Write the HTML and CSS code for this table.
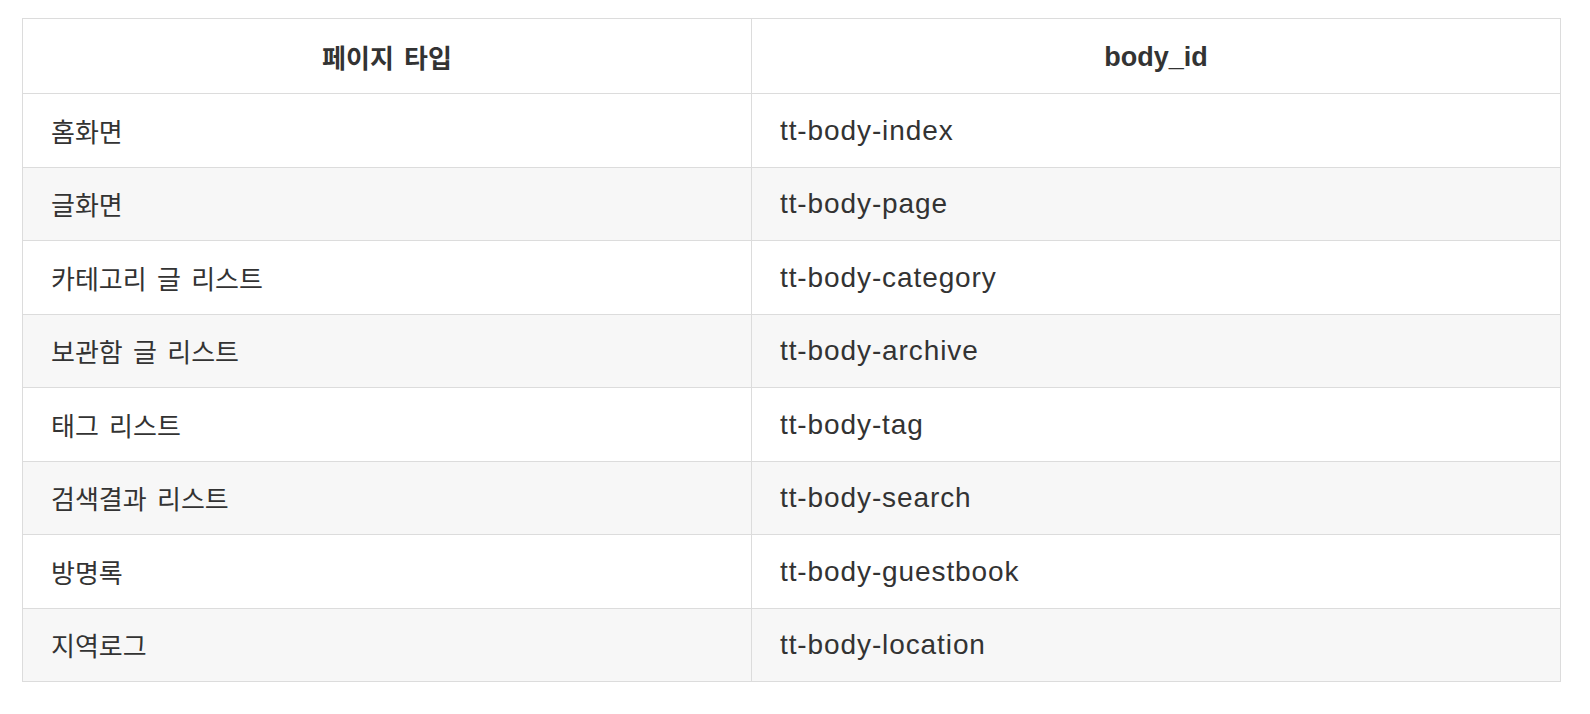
FILE: index.html
```html
<!DOCTYPE html>
<html lang="ko">
<head>
<meta charset="utf-8">
<title>body_id</title>
<link rel="stylesheet" href="styles.css">
</head>
<body>
<div class="page">
  <table class="ids">
    <colgroup>
      <col class="col-type">
      <col class="col-id">
    </colgroup>
    <thead>
      <tr>
        <th class="ko">페이지 타입</th>
        <th class="en">body_id</th>
      </tr>
    </thead>
    <tbody>
      <tr><td class="ko">홈화면</td><td class="en">tt-body-index</td></tr>
      <tr><td class="ko">글화면</td><td class="en">tt-body-page</td></tr>
      <tr><td class="ko">카테고리 글 리스트</td><td class="en">tt-body-category</td></tr>
      <tr><td class="ko">보관함 글 리스트</td><td class="en">tt-body-archive</td></tr>
      <tr><td class="ko">태그 리스트</td><td class="en">tt-body-tag</td></tr>
      <tr><td class="ko">검색결과 리스트</td><td class="en">tt-body-search</td></tr>
      <tr><td class="ko">방명록</td><td class="en">tt-body-guestbook</td></tr>
      <tr><td class="ko">지역로그</td><td class="en">tt-body-location</td></tr>
    </tbody>
  </table>
</div>
</body>
</html>
```

FILE: styles.css
```css
html, body {
  margin: 0;
  padding: 0;
  background: #ffffff;
}

.page {
  padding: 18px 0 0 22px;
}

.ids {
  border-collapse: collapse;
  table-layout: fixed;
  width: 1539px;
  color: #333333;
  font-family: "Liberation Sans", "Noto Sans CJK KR", sans-serif;
}

.col-type {
  width: 729px;
}

.ids th,
.ids td {
  border: 1px solid #dcdcdc;
  height: 71.5px;
  padding: 1px 28px 0;
  vertical-align: middle;
  line-height: 40px;
}

.ids thead th {
  height: 73px;
}

.ids th {
  text-align: center;
  font-weight: bold;
}

.ids td {
  text-align: left;
}

.ids tbody tr:nth-child(even) {
  background: #f7f7f7;
}

.ko {
  font-family: "Noto Sans CJK KR", "Liberation Sans", sans-serif;
  font-size: 26px;
  word-spacing: 3px;
}

.ids td.en {
  font-size: 28px;
  letter-spacing: 0.9px;
}

.ids th.en {
  font-size: 27px;
}
```
